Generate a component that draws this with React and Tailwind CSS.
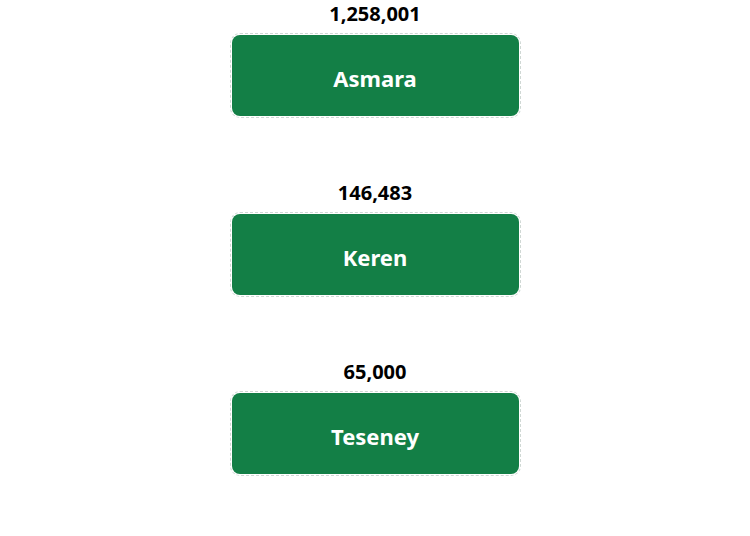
import React from "react";

const cities = [
  { name: "Asmara", population: 1258001 },
  { name: "Keren", population: 146483 },
  { name: "Teseney", population: 65000 },
];

const App = () => {
  return (
    <div className="min-h-screen w-full bg-white font-['Noto_Sans',sans-serif]">
      <div className="flex flex-col items-center gap-[61px]">
        {cities.map((city) => (
          <div key={city.name} className="flex flex-col items-center">
            <p className="text-[20px] leading-[28px] font-bold text-black">
              {city.population.toLocaleString("en-US")}
            </p>
            <div className="mt-[5px] rounded-[10px] border border-dashed border-[#cfd8d4] p-px">
              <button className="flex h-[81px] w-[287px] items-center justify-center rounded-[8px] bg-[#137f46] pt-[5px] text-[22px] font-bold text-white">
                {city.name}
              </button>
            </div>
          </div>
        ))}
      </div>
    </div>
  );
};

export default App;
